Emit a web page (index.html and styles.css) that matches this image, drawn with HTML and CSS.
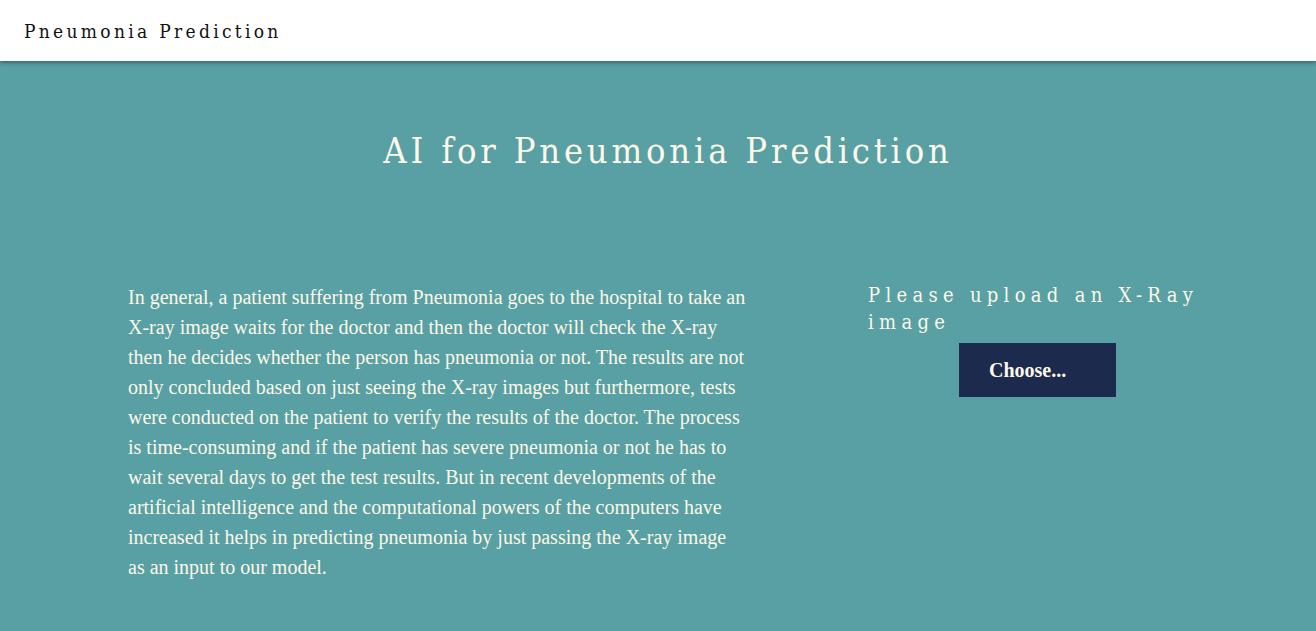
FILE: index.html
```html
<!DOCTYPE html>
<html>
<head>
<meta charset="utf-8">
<link rel="stylesheet" href="styles.css">
</head>
<body>
<header class="navbar">
  <span class="brand">Pneumonia Prediction</span>
</header>
<main class="main">
  <h1 class="title">AI for Pneumonia Prediction</h1>
  <section class="content">
    <p class="desc">In general, a patient suffering from Pneumonia goes to the hospital to take an X-ray image waits for the doctor and then the doctor will check the X-ray then he decides whether the person has pneumonia or not. The results are not only concluded based on just seeing the X-ray images but furthermore, tests were conducted on the patient to verify the results of the doctor. The process is time-consuming and if the patient has severe pneumonia or not he has to wait several days to get the test results. But in recent developments of the artificial intelligence and the computational powers of the computers have increased it helps in predicting pneumonia by just passing the X-ray image as an input to our model.</p>
    <div class="upload">
      <div class="upload-label">Please upload an X-Ray image</div>
      <button class="choose">Choose...</button>
    </div>
  </section>
</main>
</body>
</html>
```
FILE: styles.css
```css
html, body {
  margin: 0;
  padding: 0;
}
body {
  background: #58a0a3;
  font-family: "Liberation Serif", serif;
  height: 631px;
  overflow: hidden;
}
.navbar {
  background: #ffffff;
  height: 61px;
  display: flex;
  align-items: center;
  padding-left: 24px;
  box-shadow: 0 2px 4px rgba(0,0,0,0.35);
  position: relative;
  z-index: 1;
}
.brand {
  font-family: "DejaVu Serif Condensed", "DejaVu Serif", serif;
  font-stretch: condensed;
  font-size: 19px;
  letter-spacing: 3.3px;
  color: #111;
}
.main {
  padding-top: 66px;
}
.title {
  margin: 0;
  padding-left: 20px;
  text-align: center;
  font-family: "DejaVu Serif Condensed", "DejaVu Serif", serif;
  font-stretch: condensed;
  font-weight: normal;
  font-size: 36px;
  letter-spacing: 3.8px;
  color: #fdf8e8;
  line-height: 48px;
}
.content {
  display: grid;
  grid-template-columns: 618px 339px;
  column-gap: 122px;
  padding-left: 128px;
  margin-top: 107px;
}
.desc {
  margin: 0;
  font-size: 20px;
  line-height: 30px;
  color: #fdf8e8;
}
.upload {
  display: flex;
  flex-direction: column;
  align-items: center;
}
.upload-label {
  align-self: stretch;
  margin-right: -20px;
  font-family: "DejaVu Serif Condensed", "DejaVu Serif", serif;
  font-stretch: condensed;
  font-size: 20px;
  letter-spacing: 5.3px;
  line-height: 27px;
  color: #fdf8e8;
}
.choose {
  margin-top: 7px;
  width: 157px;
  height: 54px;
  border: none;
  background: #1c2a4d;
  color: #fdf8e8;
  font-family: "Liberation Serif", serif;
  font-weight: bold;
  font-size: 20px;
  text-align: left;
  padding: 0 0 0 30px;
}
```
